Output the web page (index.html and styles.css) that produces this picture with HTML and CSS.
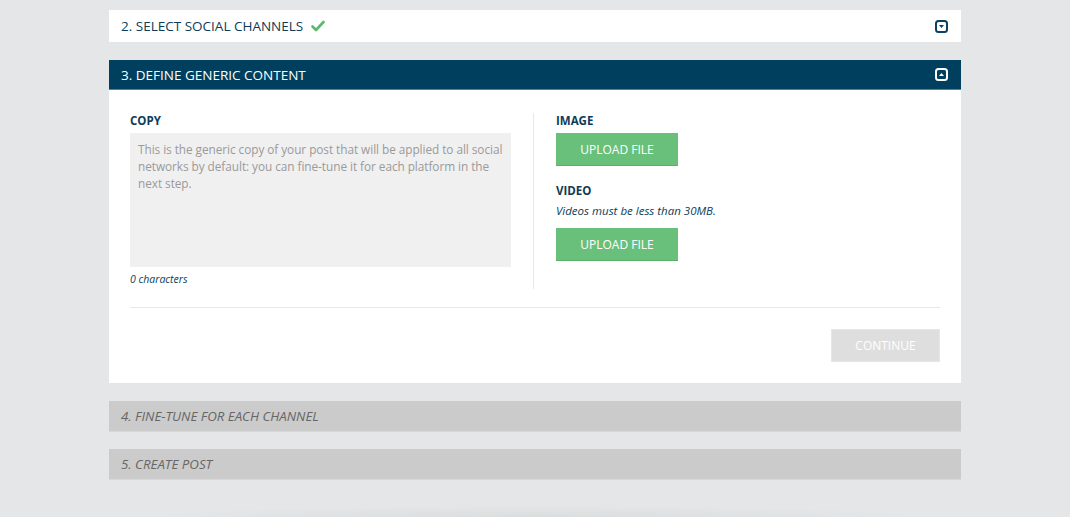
FILE: index.html
```html
<!DOCTYPE html>
<html>
<head>
<meta charset="utf-8">
<link rel="stylesheet" href="styles.css">
</head>
<body>
<div class="wrap">
  <div class="panel done">
    <div class="phead">
      <span class="ptitle">2. SELECT SOCIAL CHANNELS
        <svg class="check" width="14" height="12" viewBox="0 0 14 12"><path d="M1.5 6.5 L5 10 L12.5 2" fill="none" stroke="#5cb86a" stroke-width="2.6" stroke-linecap="round" stroke-linejoin="round"/></svg>
      </span>
      <span class="toggle tdown"><svg width="13" height="13" viewBox="0 0 13 13"><rect x="1" y="1" width="11" height="11" rx="2.5" fill="none" stroke="currentColor" stroke-width="2"/><path d="M4 5 H9 L6.5 8 Z" fill="currentColor"/></svg></span>
    </div>
  </div>

  <div class="panel open">
    <div class="phead dark">
      <span class="ptitle">3. DEFINE GENERIC CONTENT</span>
      <span class="toggle tup"><svg width="13" height="13" viewBox="0 0 13 13"><rect x="1" y="1" width="11" height="11" rx="2.5" fill="none" stroke="currentColor" stroke-width="2"/><path d="M4 8 H9 L6.5 5 Z" fill="currentColor"/></svg></span>
    </div>
    <div class="pbody">
      <div class="cols">
        <div class="col left">
          <div class="label">COPY</div>
          <div class="textarea">This is the generic copy of your post that will be applied to all social networks by default: you can fine-tune it for each platform in the next step.</div>
          <div class="count">0 characters</div>
        </div>
        <div class="col right">
          <div class="label">IMAGE</div>
          <button class="upload">UPLOAD FILE</button>
          <div class="label video">VIDEO</div>
          <div class="note">Videos must be less than 30MB.</div>
          <button class="upload">UPLOAD FILE</button>
        </div>
      </div>
      <div class="footer">
        <button class="continue">CONTINUE</button>
      </div>
    </div>
  </div>

  <div class="panel off"><div class="phead"><span class="ptitle">4. FINE-TUNE FOR EACH CHANNEL</span></div></div>
  <div class="panel off"><div class="phead"><span class="ptitle">5. CREATE POST</span></div></div>
  <div class="shadowcard"></div>
</div>
</body>
</html>
```

FILE: styles.css
```css
* { box-sizing: border-box; }
html, body { margin: 0; padding: 0; }
body {
  background: #e5e6e7;
  font-family: "Open Sans", "Liberation Sans", sans-serif;
  width: 1070px;
  height: 517px;
  overflow: hidden;
}
.wrap {
  width: 852px;
  height: 517px;
  margin-left: 109px;
  padding-top: 10px;
  display: flex;
  flex-direction: column;
  gap: 18px;
}
.panel { background: #fff; }
.phead {
  height: 32px;
  display: flex;
  align-items: center;
  justify-content: space-between;
  padding: 0 13px 0 12px;
  color: #0e3c58;
  font-size: 13.5px;
}
.ptitle { display: flex; align-items: center; gap: 8px; }
.check { margin-top: -1px; }
.toggle { display: flex; color: #0b4262; }
.phead.dark { background: #003f5e; color: #fff; height: 30px; border-bottom: 1px solid #5a7f92; }
.phead.dark .toggle { color: #fff; }
.panel.off { background: #cbcbcb; border-bottom: 1px solid #d8d8d8; }
.panel.off .phead { color: #666; font-style: italic; height: 30px; font-size: 13.3px; }
.wrap > .panel.off + .panel.off { margin-top: -1px; }
.pbody { padding: 23px 21px 21px 21px; }
.cols { display: flex; }
.col.left { width: 404px; padding-right: 22px; border-right: 1px solid #e8e8e8; }
.col.right { padding-left: 22px; }
.label { font-weight: 700; font-size: 11.5px; color: #0e3c58; line-height: 16px; margin-bottom: 4px; }
.textarea {
  background: #f0f0f0;
  height: 134px;
  padding: 8px 0 0 8px;
  color: #9a9a9a;
  font-size: 11.8px;
  letter-spacing: -0.05px;
  line-height: 17px;
}
.count { font-style: italic; font-size: 10.5px; color: #0e3c58; margin-top: 5px; line-height: 15px; padding-bottom: 2px; }
.upload {
  display: block;
  width: 122px;
  height: 33px;
  border: 0;
  border-bottom: 1px solid #5ab06a;
  background: #69c07b;
  color: #fff;
  font-family: inherit;
  font-size: 12px;
  padding: 0;
}
.label.video { margin-top: 17px; margin-bottom: 4px; }
.note { font-style: italic; font-size: 11.5px; color: #0e3c58; margin-bottom: 10px; line-height: 15px; }
.footer {
  margin-top: 18px;
  border-top: 1px solid #e8e8e8;
  padding-top: 21px;
  display: flex;
  justify-content: flex-end;
}
.continue {
  width: 109px;
  height: 33px;
  border: 1px solid #e6e6e6;
  background: #dedede;
  color: #fff;
  font-family: inherit;
  font-size: 12px;
  padding: 0;
}
.shadowcard {
  flex: 1;
  margin: 0 60px;
  background: radial-gradient(ellipse 55% 60% at 50% 100%, rgba(0,0,0,0.045), rgba(0,0,0,0));
}
```
